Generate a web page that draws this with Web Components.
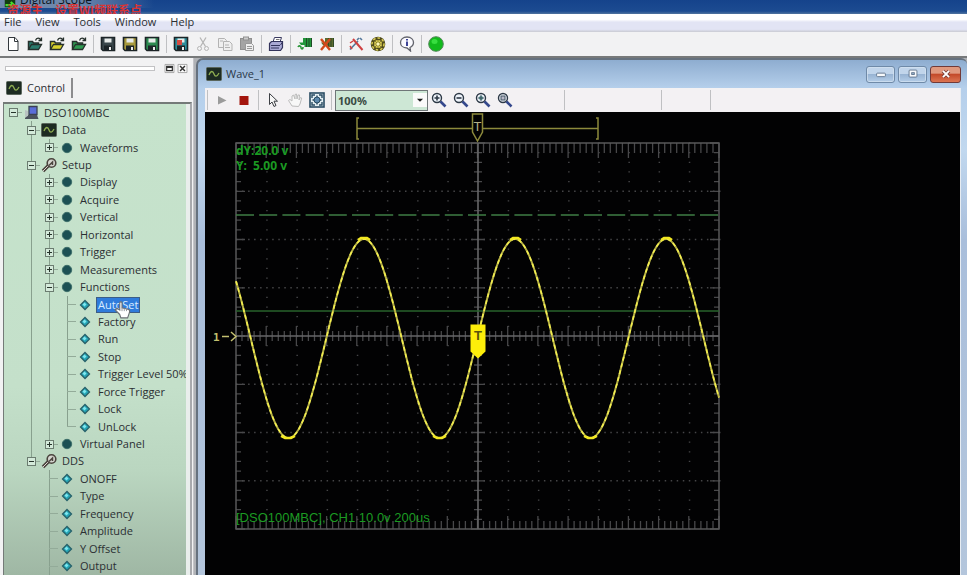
<!DOCTYPE html>
<html lang="en">
<head>
<meta charset="utf-8">
<title>Digital Scope</title>
<style>
html, body { margin: 0; height: 100%; overflow: hidden; }
body { font: 11px/16px "Open Sans", "Noto Sans", "Noto Sans CJK SC", sans-serif; color: #2b2f33; background: #f1f1f2; }
</style>
</head>
<body>
<scope-app></scope-app>
<script>
const disk = c => `<path d="M1.500 1.500h13v13H3l-1.500-1.500z" fill="${c}" stroke="#1c2427" stroke-width="1.600"/><path d="M4.500 2.500h7v4h-7z" fill="#e7ebe9"/><path d="M4 9.500h8V14H4z" fill="#1c2427"/><path d="M9 11h2v3H9z" fill="#eee"/>`;
const folder = c => `<path d="M1.500 13.500v-8h4l1 1.500h5v3" fill="${c}" stroke="#26302c" stroke-width="1.500"/><path d="M1.500 13.500l3-5h10l-3 5z" fill="${c}" stroke="#26302c" stroke-width="1.300"/><path d="M8.500 4.500c1-3 4-3 5.500-.5M14.500 1.500v3h-3" fill="none" stroke="#26302c" stroke-width="1.300"/>`;
const lens = inner => `<circle cx="6" cy="6" r="4.500" fill="#eef3fa" stroke="#2d3946" stroke-width="1.400"/><path d="M9.500 9.500l5 5" stroke="#34488c" stroke-width="2.600"/>${inner}`;
const wrench = `<path d="M2 14l6-6" stroke="#4a443e" stroke-width="3.500"/><path d="M2 14l6-6" stroke="#ddd5d0"/><circle cx="10.500" cy="6" r="4.300" fill="#d5d5cf" stroke="#4a443e" stroke-width="1.600"/><path d="M8 8.500l3.500-3.500v3" fill="none" stroke="#4a443e" stroke-width="1.500"/>`;
const waveIcon = `<rect x=".500" y="1.500" width="15" height="13" rx="1" fill="#1d2b22" stroke="#5a665c"/><path d="M3 9c2-5 4-4 5-1s3 3 5-1" fill="none" stroke="#8fae52" stroke-width="1.300"/>`;
const ICONS = {
  app: `<rect x="1" y="1" width="14" height="14" fill="#123d12"/><path d="M2 12h10M9 8l4 4-4 3" stroke="#45e02c" stroke-width="3" fill="none"/>`,
  file: `<path d="M3.500 1.500h6.500l3 3.500v9.500h-9.500z" fill="#fff" stroke="#33383d"/><path d="M9.500 1.500V5.500h3.500" fill="none" stroke="#33383d"/>`,
  open: folder('#2b7a6c'), openYellow: folder('#d9d32e'), openGreen: folder('#2e9a50'),
  save: disk('#39464a'), saveYellow: disk('#a89a3c'), saveGreen: disk('#2c8a50'),
  saveAll: disk('#2a8f9c') + `<path d="M4 4h5v5H4z" fill="#d34b42"/>`,
  cut: `<path d="M5 1.500l5.500 9M11 1.500l-5.500 9" stroke="#b5b5b5" stroke-width="1.300" fill="none"/><circle cx="4.500" cy="12.500" r="2" fill="none" stroke="#b5b5b5"/><circle cx="11.500" cy="12.500" r="2" fill="none" stroke="#b5b5b5"/>`,
  copy: `<path d="M1.500 2.500h6l2 2v7h-8z" fill="#efefef" stroke="#b3b3b3"/><path d="M6.500 5.500h6l2.500 2.500v6.500H6.500z" fill="#efefef" stroke="#b3b3b3"/><path d="M8 9h4M8 11.500h5M3 5h3" stroke="#b3b3b3"/>`,
  paste: `<rect x="1.500" y="2.500" width="11" height="11" fill="#a4a4a4" stroke="#8f8f8f"/><rect x="4.500" y="1" width="5" height="3" fill="#ccc" stroke="#8f8f8f"/><path d="M6.500 7.500h6l2 2v5h-8z" fill="#eee" stroke="#999"/><path d="M8 10.500h5M8 12.500h5" stroke="#999"/>`,
  print: `<path d="M5 6l1.500-4.500h7L12 6" fill="#fff" stroke="#3a3b60"/><path d="M1.500 7.500l2-2h11v6l-2 3h-11z" fill="#a9a9d4" stroke="#33345c" stroke-width="1.200"/><path d="M3 9.500h9M3 12h8M12.500 9l2-3" stroke="#33345c"/><path d="M8 3.500h3.500" stroke="#777"/>`,
  connect: `<path d="M1 11c1-2 3-1 3 .5S6 14 6 11" stroke="#279434" stroke-width="1.600" fill="none"/><path d="M2 6.500h4V2h9v9H7.500V9H4z" fill="#22963a"/><path d="M9.500 2v9M12 2v9M14.500 2v9" stroke="#204a26"/>`,
  disconnect: `<path d="M2 6.500h4V2h9v9H7.500V9H4z" fill="#5c6b2f"/><path d="M9.500 2v9M12 2v9M14.500 2v9" stroke="#304a26"/><path d="M2 3l9 11M11 3L2 14" stroke="#d2491c" stroke-width="2.400"/>`,
  tools: `<path d="M2 13.500l8-8.500M9 4l2-2M12 2l2 2" stroke="#54779a" stroke-width="1.600" fill="none"/><path d="M5 3l9.500 11" stroke="#cf4040" stroke-width="2"/><path d="M2 7l3-2M2 10l2 3" stroke="#cf4040" stroke-width="1.500"/>`,
  gear: `<circle cx="8" cy="8" r="7.300" fill="#4f4b1b"/><circle cx="8" cy="8" r="6" fill="none" stroke="#dccf55" stroke-width="1.500" stroke-dasharray="2.500 2"/><circle cx="8" cy="8" r="4" fill="#dccf55"/><path d="M8 4v8M4 8h8M5 5l6 6M11 5l-6 6" stroke="#77702a" stroke-width=".8"/><circle cx="8" cy="8" r="1.500" fill="#fdf7bb"/>`,
  info: `<path d="M8 1c4 0 6.500 2.500 6.500 5.500 0 2.500-1.500 4-3.500 5l.5 3.500-3.500-3C4 12 1.500 9.500 1.500 6.500S4 1 8 1z" fill="#fbfbff" stroke="#62646c" stroke-width="1.300"/><path d="M8 3v1.500M8 5.500V10" stroke="#28308c" stroke-width="1.800"/>`,
  run: `<circle cx="8" cy="8" r="7.300" fill="#12ba1c" stroke="#54875a"/><ellipse cx="6.500" cy="5.500" rx="3" ry="2.500" fill="#37de3f"/>`,
  play: `<path d="M4 4l8.500 4.500L4 12.500z" fill="#9b9b9b"/>`,
  stop: `<path d="M3.500 4h9v9h-9z" fill="#a3150d"/>`,
  pointer: `<path d="M4.500 1.500v11l2.500-2.500 2 4.500 2-1-2-4.300h3.500z" fill="#f6f6f6" stroke="#3c3f44"/>`,
  hand: `<path d="M5 14L1.500 8.500l1.500-1 2 1.500V4l1.500-1L8 7V2.500l1.500-.5.5 5 1-4h1.500L12 8l1.500-2.500 1.200.5L13 12l-1.500 2.500z" fill="#f8f8f8" stroke="#bcbcbc"/>`,
  fit: `<rect x="1" y="1" width="14" height="14" fill="#e3edf2" stroke="#2a4b63" stroke-width="1.600"/><path d="M3 6V3h3M10 3h3v3M13 10v3h-3M6 13H3v-3M8 3.500v9M3.500 8h9" stroke="#2a4b63" stroke-width="1.400" fill="none"/><circle cx="8" cy="8" r="3" fill="#5d88ac" stroke="#2a4b63"/>`,
  zoomIn: lens('<path d="M3.500 6h5M6 3.500v5" stroke="#2d3946" stroke-width="1.600"/>'),
  zoomOut: lens('<path d="M3.500 6h5" stroke="#2d3946" stroke-width="1.600"/>'),
  zoomFit: lens('<circle cx="6" cy="6" r="2" fill="#418e83"/><path d="M3 6h6M6 3v6" stroke="#455764"/>'),
  zoomArea: lens('<rect x="4" y="4" width="4" height="4" fill="#b8b8c8" stroke="#455764"/>'),
  wave: waveIcon,
  device: `<path d="M6 1.500h8v8H6z" fill="#5a6ed8" stroke="#3b4252" stroke-width="1.300"/><path d="M2 13l3-3h9l1.500 4H2z" fill="#4b535c"/><path d="M2 5l3 1v5l-3 1z" fill="#b9c3c1"/>`,
  wrench,
  branch: `<circle cx="8" cy="8" r="4.700" fill="#1c5054" stroke="#3c6e69"/>`,
  leaf: `<path d="M8 3.500l4.500 4.500-4.500 4.500-4.500-4.500z" fill="#24a5b6" stroke="#28616a" stroke-width="1.300"/><path d="M7.500 5.500l2 2-2 2-2-2z" fill="#7fe6ee"/>`,
  float: `<path d="M2.500 3h11v10h-11z" fill="#fafafa" stroke="#999"/><path d="M4.500 5.500h7v5h-7zM4 6.500h8" fill="none" stroke="#333" stroke-width="1.500"/>`,
  close: `<path d="M2.500 3h11v10h-11z" fill="#fafafa" stroke="#999"/><path d="M5 5l6 6M11 5l-6 6" stroke="#333" stroke-width="1.800"/>`,
  drop: `<path d="M4.500 6.500h7L8 10z" fill="#1c1c1c"/>`,
  min: `<rect x="3" y="7" width="10" height="4" rx="1" fill="#f7f9fb" stroke="#5c7088"/>`,
  max: `<rect x="3.500" y="3.500" width="9" height="8" rx="1" fill="#f7f9fb" stroke="#5c7088"/><rect x="6.500" y="6.500" width="3" height="2" fill="#9db7d2" stroke="#5c7088"/>`,
  quit: `<path d="M4.500 4.500l7 7M11.500 4.500l-7 7" stroke="#7b4038" stroke-width="4"/><path d="M4.500 4.500l7 7M11.500 4.500l-7 7" stroke="#fff" stroke-width="2.200"/>`,
  pointHand: `<path d="M6 12L2 8l1.500-1.500L6 8V1.500C6 .5 8 .5 8 1.500V6l6 1.500c1 .5 1 1.500.5 3L13 15H7z" fill="#fff" stroke="#6a6f74"/><path d="M8 6v3M10 6.500V9M12 7v2" stroke="#8a8f94" stroke-width=".8"/>`
};

class Base extends HTMLElement {
  constructor() { super(); this.attachShadow({ mode: 'open' }); }
  connectedCallback() { this.shadowRoot.innerHTML = this.render(); }
}

customElements.define('ui-icon', class extends Base {
  render() {
    return `<style>:host{display:block;width:var(--icon,16px);height:var(--icon,16px);flex:none}svg{display:block;width:100%;height:100%}</style>
    <svg viewBox="0 0 16 16" aria-hidden="true">${ICONS[this.getAttribute('name')]}</svg>`;
  }
});

customElements.define('tool-button', class extends Base {
  render() {
    return `<style>:host{display:block;flex:none}button{all:unset;box-sizing:border-box;display:grid;place-items:center;width:22px;height:22px}</style>
    <button type="button" aria-label="${this.getAttribute('label')}"><ui-icon name="${this.getAttribute('icon')}"></ui-icon></button>`;
  }
});

customElements.define('tool-separator', class extends Base {
  render() { return `<style>:host{display:block;flex:none;align-self:stretch;width:1px;margin:2px 3px;background:#bfc0c2}</style>`; }
});

customElements.define('title-bar', class extends Base {
  render() {
    return `<style>
    :host{display:block;height:14px;flex:none;overflow:hidden;background:linear-gradient(#15438b,#1c4b91 80%,#51749f);position:relative}
    .name{display:flex;gap:4px;padding-left:4px;width:150px;margin-top:-8px;font-size:12px;color:#0c1420;background:linear-gradient(90deg,#6e88ac 50%,#15438b00)}
    .mark{position:absolute;left:7px;top:3px;white-space:nowrap;font:bold 12px/14px "Noto Sans CJK SC",sans-serif;color:#d93535}
    ui-icon{--icon:12px;margin-top:4px}
    </style><div class="name"><ui-icon name="app"></ui-icon><span>Digital Scope</span></div><span class="mark">资源主　设置WI频联系点</span>`;
  }
});

customElements.define('menu-bar', class extends Base {
  render() {
    return `<style>
    :host{display:block;flex:none;background:linear-gradient(#fff 30%,#e2e4f4 45%,#e2e4f4 85%,#c9cad2)}
    nav{display:flex;gap:14px;padding:0 4px 2px}button{all:unset;font:inherit;line-height:16px}
    </style><nav>${['File','View','Tools','Window','Help'].map(t=>`<button type="button">${t}</button>`).join('')}</nav>`;
  }
});

customElements.define('main-toolbar', class extends Base {
  render() {
    const groups = [
      [['file','New'],['open','Open'],['openYellow','Open waveform'],['openGreen','Open setup']],
      [['save','Save'],['saveYellow','Save waveform'],['saveGreen','Save setup']],
      [['saveAll','Save all'],['cut','Cut'],['copy','Copy'],['paste','Paste']],
      [['print','Print']],
      [['connect','Connect'],['disconnect','Disconnect']],
      [['tools','Tools'],['gear','Options']],
      [['info','About']],
      [['run','Status']]];
    return `<style>:host{display:flex;flex:none;align-items:center;padding:1px 2px;background:#f2f2f3;border-bottom:2px solid #77797a}</style>` +
      groups.map(g => g.map(([i,l]) => `<tool-button icon="${i}" label="${l}"></tool-button>`).join('')).join('<tool-separator></tool-separator>');
  }
});

const branch = (t, kids, icon = 'branch') => ({ t, kids, icon });
const leaf = t => ({ t, icon: 'leaf' });
const TREE = { t: 'DSO100MBC', icon: 'device', open: 1, kids: [
  { t: 'Data', icon: 'wave', open: 1, kids: [branch('Waveforms', [])] },
  { t: 'Setup', icon: 'wrench', open: 1, kids: [
    ...['Display','Acquire','Vertical','Horizontal','Trigger','Measurements'].map(t => branch(t, [])),
    { t: 'Functions', icon: 'branch', open: 1, kids: ['AutoSet','Factory','Run','Stop','Trigger Level 50%','Force Trigger','Lock','UnLock'].map(leaf) },
    branch('Virtual Panel', [])] },
  { t: 'DDS', icon: 'wrench', open: 1, more: 1, kids: ['ONOFF','Type','Frequency','Amplitude','Y Offset','Output'].map(leaf) }
] };

customElements.define('tree-row', class extends Base {
  render() {
    const cells = this.getAttribute('guides').split('').map(c => `<i class="${c === '1' ? 'v' : ''}"></i>`).join('');
    const end = this.getAttribute('end');
    const open = this.getAttribute('open');
    const sel = this.hasAttribute('selected');
    return `<style>
    :host{display:flex;flex:1 0 16px;align-items:center;white-space:nowrap}
    i{width:18px;flex:none;align-self:stretch}
    .v,.elbow{background:linear-gradient(#88a08e,#88a08e) 9px 0/1px 100% no-repeat}
    .last{background-size:1px 50%}.root{background:none}
    .elbow{width:18px;flex:none;align-self:stretch;display:grid;align-items:center}
    .elbow::after{content:"";grid-area:1/1;height:1px;margin-left:9px;background:#93ab99}
    .elbow button{all:unset;grid-area:1/1;z-index:1;box-sizing:border-box;justify-self:center;width:9px;height:9px;border:1px solid #6b7c70;background:
      linear-gradient(#26332a,#26332a) center/5px 1px no-repeat,
      linear-gradient(#26332a,#26332a) center/${open === '0' ? '1px 5px' : '0 0'} no-repeat,#d4eada}
    ui-icon{margin:0 1px}
    .label{position:relative;margin-left:2px;padding:0 2px;line-height:16px}
    .sel{background:#2f7bdb;color:#d7ecff;outline:1px solid #3c5d86;outline-offset:-1px}
    .cursor{position:absolute;left:16px;top:4px;--icon:18px}
    </style>${cells}<span class="elbow ${end === '1' ? 'last' : ''} ${this.hasAttribute('root') ? 'root' : ''}">${open === null ? '' : `<button type="button" aria-label="Toggle ${this.getAttribute('text')}"></button>`}</span><ui-icon name="${this.getAttribute('icon')}"></ui-icon><span class="label ${sel ? 'sel' : ''}">${this.getAttribute('text')}${sel ? '<ui-icon class="cursor" name="pointHand"></ui-icon>' : ''}</span>`;
  }
});

customElements.define('control-panel', class extends Base {
  render() {
    const rows = [];
    const walk = (n, guides, last, root) => {
      rows.push(`<tree-row role="treeitem" text="${n.t}" icon="${n.icon}" guides="${guides}" end="${last ? 1 : 0}" ${n.kids ? `open="${n.open ? 1 : 0}"` : ''} ${root ? 'root' : ''} ${n.t === 'AutoSet' ? 'selected style="position:relative;z-index:1"' : ''}></tree-row>`);
      if (n.kids) n.kids.forEach((k, i) => walk(k, root ? '0' : guides + (last ? '0' : '1'), !n.more && i === n.kids.length - 1));
    };
    TREE.kids.at(-1).last = true;
    walk(TREE, '', true, true);
    return `<style>
    :host{display:flex;flex-direction:column;min-height:0;background:#f2f2f3;border-right:1px solid #c4c4c8}
    .grip{display:flex;align-items:center;padding:4px 4px 0 5px}
    .grip span{flex:1;height:3px;margin-right:8px;border:1px solid #c2c2c4;background:#fff}
    .grip button{all:unset;height:13px}.grip ui-icon{--icon:13px}
    .tab{display:flex;align-items:center;gap:5px;align-self:start;margin:3px 0 4px 6px;padding-right:6px;border-right:2px solid #8c8c8e;height:20px}
    .tab button{all:unset;font:inherit}
    .tree{flex:1;min-height:0;display:flex;flex-direction:column;margin:0 1px 0 3px;border:solid #747a78;border-width:2px 2px 0 1px;border-right-color:#a8a9ad;background:#e9eeec}
    .rows{flex:1;display:flex;flex-direction:column;overflow:hidden;margin-right:4px;background:linear-gradient(#c6e3cc,#c4e0ca 60%,#bad6c0 78%,#9fb7a4)}
    </style>
    <div class="grip"><span></span><button type="button" aria-label="Float"><ui-icon name="float"></ui-icon></button><button type="button" aria-label="Close panel"><ui-icon name="close"></ui-icon></button></div>
    <div class="tab"><ui-icon name="wave"></ui-icon><button type="button" role="tab">Control</button></div>
    <div class="tree"><div class="rows" role="tree">${rows.join('')}</div></div>`;
  }
});

customElements.define('wave-toolbar', class extends Base {
  render() {
    const b = (i, l) => `<tool-button icon="${i}" label="${l}"></tool-button>`;
    return `<style>
    :host{display:flex;align-items:center;height:24px;background:#f3f1f3}
    tool-separator:first-of-type{margin-left:2px}
    .zoom{display:grid;flex:none;width:93px;height:21px;box-sizing:border-box;border:1px solid #6f7678;background:#cde7d5}
    select{all:unset;grid-area:1/1;padding-left:2px;font:bold 11px/19px "Noto Sans",sans-serif;color:#3a4a42}
    .zoom ui-icon{--icon:14px;grid-area:1/1;justify-self:end;align-self:center;background:#fafafa;pointer-events:none}
    .gap{flex:none;border-right:1px solid #bfc0c2;align-self:stretch;margin:2px 0;box-sizing:border-box}
    .s{width:49px}.l{width:97px}
    </style><tool-separator></tool-separator>${b('play','Run')}${b('stop','Stop')}<tool-separator></tool-separator>${b('pointer','Select')}${b('hand','Pan')}${b('fit','Fit')}<tool-separator></tool-separator>
    <label class="zoom"><select aria-label="Zoom"><option>100%</option></select><ui-icon name="drop"></ui-icon></label>
    ${b('zoomIn','Zoom in')}${b('zoomOut','Zoom out')}${b('zoomFit','Zoom to fit')}${b('zoomArea','Zoom to area')}<span class="gap s"></span><span class="gap l"></span><span class="gap s"></span>`;
  }
});

customElements.define('scope-screen', class extends Base {
  render() {
    const L = 236, R = 719, T = 143, B = 529, CX = 478, CY = 336, dx = (R - L) / 80, dy = (B - T) / 40;
    let ticks = '', dots = '';
    for (let i = 0; i <= 80; i++) {
      const x = (L + i * dx).toFixed(1), m = i % 5 === 0;
      ticks += `M${x} ${T}v${m ? 15 : 10}M${x} ${B}v${m ? -13 : -8}M${x} ${CY - (m ? 10 : 5)}v${m ? 20 : 10}`;
      for (let r = 1; r < 8; r++) if (r !== 4) dots += `M${x} ${T + r * 5 * dy}h1.5`;
    }
    for (let j = 0; j <= 40; j++) {
      const y = (T + j * dy).toFixed(1), m = j % 5 === 0;
      ticks += `M${L} ${y}h${m ? 9 : 5}M${R} ${y}h${m ? -9 : -5}M${CX - (m ? 7 : 4)} ${y}h${m ? 14 : 8}`;
      for (let c = 1; c < 16; c++) if (c !== 8) dots += `M${(L + c * 5 * dx).toFixed(1)} ${y}h1.5`;
    }
    let wave = '';
    for (let x = L; x <= R; x++) wave += `${x === L ? 'M' : 'L'}${x} ${(338.5 - 99.5 * Math.cos(2 * Math.PI * (x - 364) / 151)).toFixed(1)}`;
    return `<style>
    :host{display:block;flex:1;min-height:0;overflow:hidden;background:#020203}
    svg{display:block}
    text{font-family:"Liberation Sans",Arial,sans-serif;white-space:pre}
    .green{font-size:13px;fill:#1b9a22}
    .read{font-family:"Noto Sans",sans-serif;font-size:12px;font-weight:bold}
    .num{font:bold 11px "DejaVu Sans Mono",monospace;fill:#c3c070}
    </style>
    <svg width="755" height="463" viewBox="205 112 755 463" role="img" aria-label="Oscilloscope trace">
    <path d="${dots}" stroke="#454547" stroke-width="1.300"/>
    <path d="${ticks}" stroke="#48484a" stroke-width="1.300"/>
    <path d="M${L} ${T}H${R}V${B}H${L}z" fill="none" stroke="#58585a" stroke-width="1.500"/>
    <path d="M${L} ${CY}H${R}M${CX} ${T}V${B}" stroke="#666668" stroke-width="1.600"/>
    <path d="M236 215H719" stroke="#3f7d45" stroke-width="1.600" stroke-dasharray="18 5.200"/>
    <path d="M236 311H719" stroke="#28632c" stroke-width="1.600"/>
    <path d="${wave}" fill="none" stroke="#b5b045" stroke-width="2"/>
    <path d="${wave}" fill="none" stroke="#f4ef50" stroke-width="1.600" stroke-dasharray="4 3"/>
    <path d="M358 240l3-2h6l3 2M510 240l3-2h5l3 2M661 240l3-2h5l3 2M281 436l4 2h6l4-2M433 436l4 2h5l4-2M584 436l4 2h5l4-2" fill="none" stroke="#f2e822" stroke-width="2.500"/>
    <path d="M359 118h-2v21h2M357 128.500H598M596 118h2v21h-2" fill="none" stroke="#8d8a3c" stroke-width="1.500"/>
    <path d="M472.500 114h10v18l-5 9-5-9z" fill="#020203" stroke="#8d8a3c" stroke-width="1.500"/>
    <text x="477.500" y="131" text-anchor="middle" font-size="13" fill="#b5b28a">T</text>
    <path d="M470.500 324.500h15v27l-7.500 7-7.500-7z" fill="#fdee0a"/>
    <text x="478" y="340" text-anchor="middle" font-size="13" font-weight="bold" fill="#59540c">T</text>
    <text class="num" x="213" y="341">1</text><path d="M222 336.500h7M231 332l5 4.500-5 4.500" fill="none" stroke="#c3c070" stroke-width="1.500"/>
    <text class="green read" x="236" y="155">dY:20.0 v</text>
    <text class="green read" x="236" y="170">Y:  5.00 v</text>
    <text class="green" x="236" y="522">[DSO100MBC], CH1 10.0v 200us</text>
    </svg>`;
  }
});

customElements.define('wave-window', class extends Base {
  render() {
    return `<style>
    :host{display:flex;flex-direction:column;min-height:0;box-sizing:border-box;padding:0 6px 0 7px;border:solid #66717e;border-width:2px 0 0 2px;border-radius:7px 6px 0 0;background:linear-gradient(#8eadd0,#b5cfeb 28px,#c1d8ef 90px,#a9bedb 180px,#b4c6dc)}
    header{display:flex;align-items:center;height:28px;flex:none;gap:4px;padding-left:1px}
    h1{flex:1;margin:0;font:inherit;color:#2b3848}
    .box{display:flex;gap:3px}
    .box button{all:unset;box-sizing:border-box;display:grid;place-items:center;width:29px;height:17px;border:1px solid #6f8aa8;border-radius:3px;background:linear-gradient(#c1d5eb 45%,#98b4d3 50%,#b4cde8);box-shadow:inset 0 0 0 1px #d7e4f2aa}
    .box ui-icon{--icon:14px}
    .box .quit{width:31px;border-color:#713a38;background:linear-gradient(#e0997f 40%,#c44a2a 50%,#dc7552);box-shadow:none}
    .body{flex:1;min-height:0;display:flex;flex-direction:column;border-right:1px solid #e6ecf2}
    </style>
    <header><ui-icon name="wave"></ui-icon><h1>Wave_1</h1><div class="box"><button type="button" aria-label="Minimize"><ui-icon name="min"></ui-icon></button><button type="button" aria-label="Maximize"><ui-icon name="max"></ui-icon></button><button type="button" class="quit" aria-label="Close"><ui-icon name="quit"></ui-icon></button></div></header>
    <div class="body"><wave-toolbar></wave-toolbar><scope-screen></scope-screen></div>`;
  }
});

customElements.define('scope-app', class extends Base {
  render() {
    return `<style>
    :host{display:flex;flex-direction:column;height:100vh}
    main{flex:1;min-height:0;display:grid;grid-template-columns:194px minmax(0,1fr);grid-template-rows:minmax(0,1fr)}
    .desk{display:grid;padding-left:2px;background:#b0b2b6;min-height:0;grid-template-rows:minmax(0,1fr)}
    </style><title-bar></title-bar><menu-bar></menu-bar><main-toolbar></main-toolbar>
    <main><control-panel></control-panel><div class="desk"><wave-window></wave-window></div></main>`;
  }
});
</script>
</body>
</html>
